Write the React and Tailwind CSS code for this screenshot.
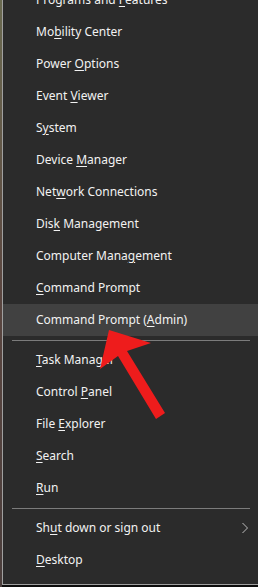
import React from 'react'

// Win+X power user menu, dark theme, with a red arrow pointing at the admin prompt
const GROUPS = [
  [
    ['Programs and ', 'F', 'eatures'],
    ['Mo', 'b', 'ility Center'],
    ['Power ', 'O', 'ptions'],
    ['Event ', 'V', 'iewer'],
    ['S', 'y', 'stem'],
    ['Device ', 'M', 'anager'],
    ['Net', 'w', 'ork Connections'],
    ['Dis', 'k', ' Management'],
    ['Computer Mana', 'g', 'ement'],
    ['', 'C', 'ommand Prompt'],
    ['Command Prompt (', 'A', 'dmin)', 'active'],
  ],
  [
    ['', 'T', 'ask Manager'],
    ['Control ', 'P', 'anel'],
    ['File ', 'E', 'xplorer'],
    ['', 'S', 'earch'],
    ['', 'R', 'un'],
  ],
  [
    ['Sh', 'u', 't down or sign out', 'sub'],
    ['', 'D', 'esktop'],
  ],
]

function Item({ before, key_, after, flag }) {
  return (
    <div
      className={
        'flex h-[32px] shrink-0 items-center justify-between pl-[33px] pr-[9px] ' +
        (flag === 'active' ? 'bg-[#414141]' : '')
      }
    >
      <span className="whitespace-nowrap text-[12px] text-[#f2f2f2]">
        {before}
        <span className="underline underline-offset-2">{key_}</span>
        {after}
      </span>
      {flag === 'sub' && (
        <svg width="8" height="12" viewBox="0 0 8 12">
          <polyline points="1.5,1 6.5,6 1.5,11" fill="none" stroke="#bdbdbd" strokeWidth="1" />
        </svg>
      )}
    </div>
  )
}

export default function App() {
  return (
    <div className="relative flex h-[587px] w-[258px] overflow-hidden bg-[#0d0d0d]" style={{ fontFamily: '"Noto Sans", "Open Sans", sans-serif' }}>
      <div className="w-[2px] shrink-0 bg-gradient-to-b from-[#6a6a50] via-[#5a4640] to-[#4a3e3c]" />
      <div className="mb-[2px] flex flex-1 flex-col overflow-hidden border-b border-l border-[#a0a0a0] bg-[#2b2b2b]">
        <div className="-mt-[16px] flex flex-col">
          {GROUPS.map((group, gi) => (
            <React.Fragment key={gi}>
              {gi > 0 && (
                <div className="flex h-[8px] shrink-0 items-center pl-[9px] pr-[8px]">
                  <div className="h-px flex-1 bg-[#7c7c7c]" />
                </div>
              )}
              {group.map(([b, k, a, f]) => (
                <Item key={b + k + a} before={b} key_={k} after={a} flag={f} />
              ))}
            </React.Fragment>
          ))}
        </div>
      </div>
      <svg className="pointer-events-none absolute left-0 top-0" width="258" height="587" viewBox="0 0 258 587">
        <polygon
          points="109,330 151,343 127,351 165,413 156,419 118,356 100,369"
          fill="#ee1c1c"
        />
      </svg>
    </div>
  )
}
